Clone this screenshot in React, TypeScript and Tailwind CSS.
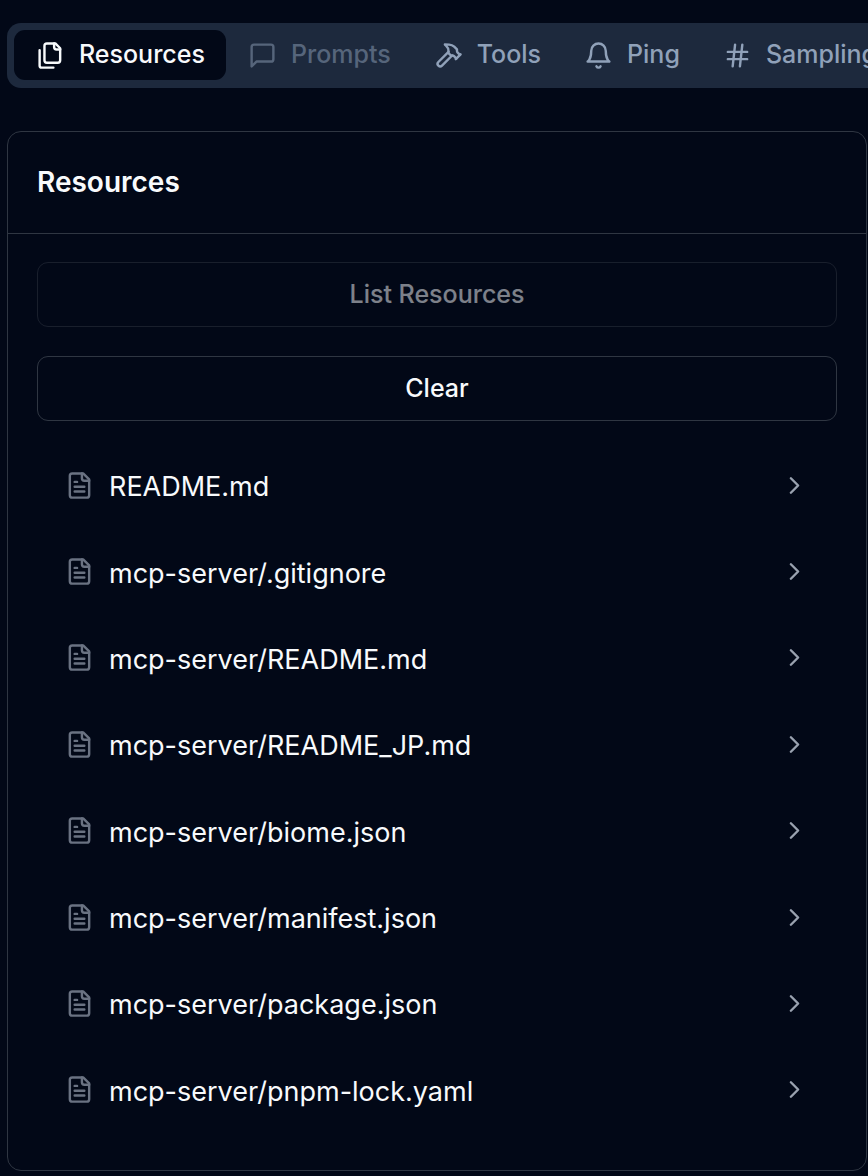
import type { ReactNode } from "react";

function Icon({ children, className = "" }: { children: ReactNode; className?: string }) {
  return (
    <svg
      viewBox="0 0 24 24"
      fill="none"
      stroke="currentColor"
      strokeWidth="2"
      strokeLinecap="round"
      strokeLinejoin="round"
      aria-hidden="true"
      className={`size-[29px] shrink-0 ${className}`}
    >
      {children}
    </svg>
  );
}

const FilesIcon = () => (
  <Icon>
    <path d="M20 7h-3a2 2 0 0 1-2-2V2" />
    <path d="M9 18a2 2 0 0 1-2-2V4a2 2 0 0 1 2-2h7l4 4v10a2 2 0 0 1-2 2Z" />
    <path d="M3 7.6v12.8A1.6 1.6 0 0 0 4.6 22h9.8" />
  </Icon>
);

const MessageIcon = () => (
  <Icon>
    <path d="M21 15a2 2 0 0 1-2 2H7l-4 4V5a2 2 0 0 1 2-2h14a2 2 0 0 1 2 2z" />
  </Icon>
);

const HammerIcon = () => (
  <Icon>
    <path d="m15 12-8.373 8.373a1 1 0 1 1-3-3L12 9" />
    <path d="m18 15 4-4" />
    <path d="m21.5 11.5-1.914-1.914A2 2 0 0 1 19 8.172V7l-2.26-2.26a6 6 0 0 0-4.202-1.756L9 2.96l.92.82A6.18 6.18 0 0 1 12 8.4V10l2 2h1.172a2 2 0 0 1 1.414.586L18.5 14.5" />
  </Icon>
);

const BellIcon = () => (
  <Icon>
    <path d="M6 8a6 6 0 0 1 12 0c0 7 3 9 3 9H3s3-2 3-9" />
    <path d="M10.3 21a1.94 1.94 0 0 0 3.4 0" />
  </Icon>
);

const HashIcon = () => (
  <Icon>
    <path d="M4 9h16M4 15h16M10 3 8 21M16 3l-2 18" />
  </Icon>
);

const FileTextIcon = () => (
  <Icon className="text-gray-500">
    <path d="M15 2H6a2 2 0 0 0-2 2v16a2 2 0 0 0 2 2h12a2 2 0 0 0 2-2V7Z" />
    <path d="M14 2v4a2 2 0 0 0 2 2h4M10 9H8M16 13H8M16 17H8" />
  </Icon>
);

const ChevronIcon = () => (
  <Icon className="text-gray-400">
    <path d="m9 18 6-6-6-6" />
  </Icon>
);

const tabs = [
  { label: "Resources", icon: <FilesIcon />, active: true },
  { label: "Prompts", icon: <MessageIcon />, disabled: true },
  { label: "Tools", icon: <HammerIcon /> },
  { label: "Ping", icon: <BellIcon /> },
  { label: "Sampling", icon: <HashIcon /> },
];

const resources = [
  "README.md",
  "mcp-server/.gitignore",
  "mcp-server/README.md",
  "mcp-server/README_JP.md",
  "mcp-server/biome.json",
  "mcp-server/manifest.json",
  "mcp-server/package.json",
  "mcp-server/pnpm-lock.yaml",
];

const actionClass =
  "flex h-[65px] w-full items-center justify-center rounded-[11px] border border-[#2f3642] text-[25px] font-medium disabled:opacity-50";

export default function App() {
  return (
    <div className="min-h-screen overflow-hidden bg-[#020817] pt-[23px] pb-[5px] pl-[7px] font-['Inter',sans-serif] text-slate-50">
      <div role="tablist" className="flex h-[65px] w-max min-w-full items-start rounded-[14px] bg-slate-800 p-[7px]">
        {tabs.map((tab) => (
          <button
            key={tab.label}
            type="button"
            role="tab"
            aria-selected={!!tab.active}
            disabled={tab.disabled}
            className={`flex h-[50px] items-center gap-[14px] rounded-[11px] pr-[21px] pl-[22px] text-[25px] font-medium whitespace-nowrap disabled:opacity-50 ${
              tab.active ? "bg-[#020817] text-slate-50" : "text-slate-400"
            }`}
          >
            {tab.icon}
            {tab.label}
          </button>
        ))}
      </div>

      <section className="mt-[43px] mr-px rounded-[14px] border border-[#2f3642]">
        <header className="border-b border-[#2f3642] px-[29px] py-[30px]">
          <h3 className="text-[28px] leading-[41px] font-semibold">Resources</h3>
        </header>
        <div className="px-[29px] pt-7 pb-[37px]">
          <div className="flex flex-col gap-[29px]">
            <button type="button" disabled className={actionClass}>
              List Resources
            </button>
            <button type="button" className={actionClass}>
              Clear
            </button>
          </div>
          <ul className="mt-[21px] grid min-h-[691px] auto-rows-fr">
            {resources.map((name) => (
              <li key={name} className="flex">
                <button type="button" className="flex w-full items-center gap-[15px] px-[28px] text-left">
                  <FileTextIcon />
                  <span className="flex-1 truncate pt-1 text-[27px] leading-10">{name}</span>
                  <ChevronIcon />
                </button>
              </li>
            ))}
          </ul>
        </div>
      </section>
    </div>
  );
}
